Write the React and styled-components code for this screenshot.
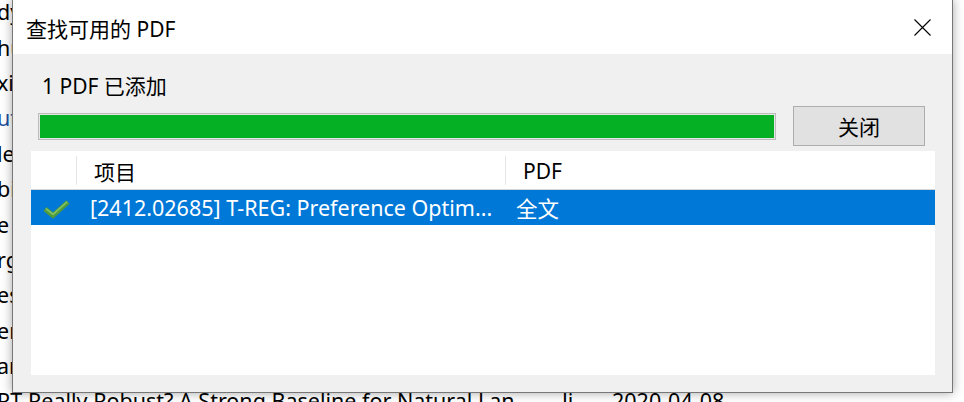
import React from 'react'
import styled, { createGlobalStyle } from 'styled-components'

const GlobalStyle = createGlobalStyle`
	html, body {
		margin: 0;
		padding: 0;
		background: #fff;
	}
	body {
		font-family: "Segoe UI", "Noto Sans", "Noto Sans CJK SC", sans-serif;
		color: #000;
	}
`

const backRows = [
	{ text: 'dy' },
	{ text: 'hu' },
	{ text: 'xin' },
	{ text: 'ute', link: true },
	{ text: 'lea' },
	{ text: 'bit' },
	{ text: 'e m' },
	{ text: 'rge' },
	{ text: 'est' },
	{ text: 'ere' },
	{ text: 'ar ' },
]

const CheckIcon = () => (
	<svg width="30" height="20" viewBox="0 0 30 20">
		<path d="M3 10 L11 16.5 L26 3" fill="none" stroke="#4f9a3d" strokeWidth="5" />
		<path d="M3.8 9.6 L11 15.4 L25.2 2.9" fill="none" stroke="#80c365" strokeWidth="1.6" />
	</svg>
)

const CloseIcon = () => (
	<svg width="17" height="17" viewBox="0 0 17 17">
		<path d="M0.5 0.5 L16.5 16.5 M16.5 0.5 L0.5 16.5" stroke="#000" strokeWidth="1.1" />
	</svg>
)

const App = () => {
	return (
		<Screen>
			<GlobalStyle />
			<BackList>
				{backRows.map((r, i) => (
					<BackRow key={i} $link={r.link}>
						<span>{r.text}</span>
					</BackRow>
				))}
				<BackRow>
					<span>RT Really Robust? A Strong Baseline for Natural Lan...</span>
					<span>Ji...</span>
					<span>2020-04-08</span>
				</BackRow>
			</BackList>

			<Dialog>
				<TitleBar>
					<Title>查找可用的 PDF</Title>
					<CloseBox>
						<CloseIcon />
					</CloseBox>
				</TitleBar>
				<Body>
					<Status>1 PDF 已添加</Status>
					<ProgressRow>
						<Track>
							<Fill style={{ width: '100%' }} />
						</Track>
						<Button>关闭</Button>
					</ProgressRow>
					<List>
						<HeadRow>
							<HeadCell />
							<HeadCell>
								<Divider />
								<HeadLabel>项目</HeadLabel>
							</HeadCell>
							<HeadCell>
								<Divider />
								<HeadLabel>PDF</HeadLabel>
							</HeadCell>
						</HeadRow>
						<ItemRow $selected>
							<IconCell>
								<CheckIcon />
							</IconCell>
							<Cell $pad={14}>[2412.02685] T-REG: Preference Optim...</Cell>
							<Cell $pad={11}>全文</Cell>
						</ItemRow>
					</List>
				</Body>
			</Dialog>
		</Screen>
	)
}

const Screen = styled.div`
	position: relative;
	width: 964px;
	height: 402px;
	overflow: hidden;
	background: #fff;
`

const BackList = styled.div`
	display: flex;
	flex-direction: column;
	margin-top: -6px;
	margin-left: -3px;
`

const BackRow = styled.div`
	display: grid;
	grid-template-columns: 565px 50px auto;
	align-items: center;
	height: 35.4px;
	font-size: 21.5px;
	white-space: nowrap;
	color: ${p => (p.$link ? '#1d4f9e' : '#000')};
`

const Dialog = styled.div`
	position: absolute;
	left: 12px;
	top: -1px;
	width: 941px;
	height: 394px;
	box-sizing: border-box;
	display: flex;
	flex-direction: column;
	background: #f0f0f0;
	border: 1px solid #777;
	box-shadow: 0 0 10px rgba(0, 0, 0, 0.35);
`

const TitleBar = styled.div`
	display: flex;
	align-items: center;
	justify-content: space-between;
	height: 54px;
	background: #fff;
	padding-left: 13px;
`

const Title = styled.div`
	font-size: 21px;
	margin-top: 1px;
`

const CloseBox = styled.div`
	display: flex;
	align-items: center;
	justify-content: center;
	width: 60px;
	height: 54px;
	margin-top: 1px;
`

const Body = styled.div`
	flex: 1;
	display: flex;
	flex-direction: column;
`

const Status = styled.div`
	font-size: 21px;
	line-height: 28px;
	padding: 18px 0 0 29px;
`

const ProgressRow = styled.div`
	display: flex;
	align-items: center;
	gap: 17px;
	padding: 6px 27px 0 25px;
`

const Track = styled.div`
	flex: 1;
	height: 27px;
	box-sizing: border-box;
	border: 1px solid #bcbcbc;
	background: #e6e6e6;
	padding: 1px;
	display: flex;
`

const Fill = styled.div`
	height: 100%;
	background: #06b025;
`

const Button = styled.button`
	width: 132px;
	height: 40px;
	box-sizing: border-box;
	border: 1px solid #adadad;
	background: #e1e1e1;
	font-family: inherit;
	font-size: 21px;
	color: #000;
	padding: 0;
`

const List = styled.div`
	flex: 1;
	margin: 5px 17px 17px 18px;
	background: #fff;
	display: flex;
	flex-direction: column;
`

const columns = '45px 429px 1fr'

const HeadRow = styled.div`
	display: grid;
	grid-template-columns: ${columns};
	height: 38px;
	border-bottom: 1px solid #d5d5d5;
`

const HeadCell = styled.div`
	display: flex;
	align-items: center;
`

const Divider = styled.span`
	width: 1px;
	height: 29px;
	background: #e5e5e5;
`

const HeadLabel = styled.span`
	font-size: 21px;
	margin-left: 17px;
	margin-top: 1px;
`

const ItemRow = styled.div`
	display: grid;
	grid-template-columns: ${columns};
	height: 35px;
	align-items: center;
	background: ${p => (p.$selected ? '#0078d7' : 'transparent')};
	color: ${p => (p.$selected ? '#fff' : '#000')};
`

const IconCell = styled.div`
	display: flex;
	align-items: center;
	padding-left: 11px;
	padding-top: 2px;
`

const Cell = styled.div`
	font-size: 21.5px;
	white-space: nowrap;
	overflow: hidden;
	padding-left: ${p => p.$pad}px;
`

export default App
